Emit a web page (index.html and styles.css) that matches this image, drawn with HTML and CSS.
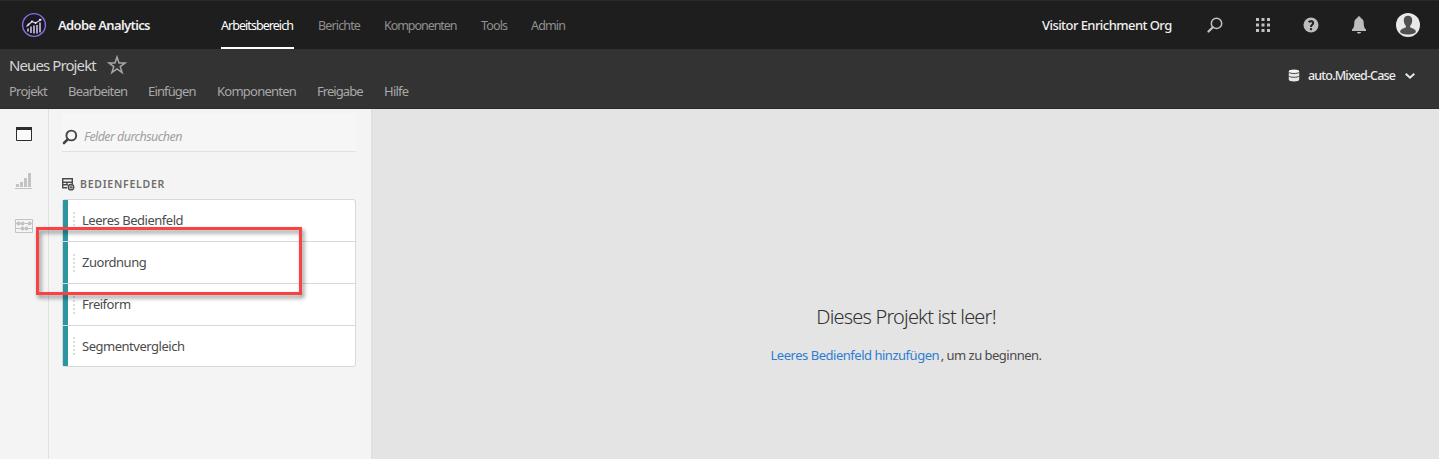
FILE: index.html
```html
<!DOCTYPE html>
<html lang="de">
<head>
<meta charset="utf-8">
<title>Adobe Analytics – Neues Projekt</title>
<link rel="stylesheet" href="styles.css">
</head>
<body>
<header class="topbar">
  <svg class="logo" width="26" height="26" viewBox="0 0 26 26">
    <circle cx="13" cy="13" r="11.400" fill="#1b1824" stroke="#8a6fdc" stroke-width="1.400"/>
    <path d="M7 19.500v-3M10 21v-6.500M13 21.500v-8M16 21.500V13M19 20.500V10.500" stroke="#a89fba" stroke-width="2"/>
    <path d="M5.500 14.500L11 9.500l3.500 1.500L20.500 7.500" fill="none" stroke="#e6e0ee" stroke-width="1.100"/>
    <circle cx="7.500" cy="12.500" r=".9" fill="#eee"/><circle cx="11" cy="9.500" r="1" fill="#eee"/><circle cx="14.500" cy="11" r="1" fill="#eee"/><circle cx="19" cy="7.800" r="1.100" fill="#eee"/>
  </svg>
  <span class="brand">Adobe Analytics</span>
  <nav class="nav">
    <a class="nav-item active">Arbeitsbereich</a>
    <a class="nav-item">Berichte</a>
    <a class="nav-item">Komponenten</a>
    <a class="nav-item">Tools</a>
    <a class="nav-item">Admin</a>
  </nav>
  <span class="org">Visitor Enrichment Org</span>
  <div class="tools">
    <svg width="16" height="16" viewBox="0 0 16 16"><circle cx="9.500" cy="6.400" r="5.200" fill="none" stroke="#c2c2c2" stroke-width="1.500"/><path d="M5.800 10.200L1.500 14.500" stroke="#c2c2c2" stroke-width="2.200" stroke-linecap="round"/></svg>
    <svg width="16" height="16" viewBox="0 0 16 16" fill="#c2c2c2"><path d="M1 1h3v3H1zM6.500 1h3v3h-3zM12 1h3v3h-3zM1 6.500h3v3H1zM6.500 6.500h3v3h-3zM12 6.500h3v3h-3zM1 12h3v3H1zM6.500 12h3v3h-3zM12 12h3v3h-3z"/></svg>
    <svg width="16" height="16" viewBox="0 0 16 16"><circle cx="8" cy="8" r="7.500" fill="#bdbdbd"/><path d="M5.700 5.200C7 3.700 10.300 3.900 10.200 6.100 10.100 7.800 8 7.900 8 9.900" fill="none" stroke="#1e1e1e" stroke-width="1.900"/><circle cx="8" cy="12.100" r="1.200" fill="#1e1e1e"/></svg>
    <svg width="16" height="18" viewBox="0 0 16 18" fill="#bdbdbd"><path d="M8 .3c1 0 1.600.7 1.600 1.700 2.100.7 3 2.400 3.100 4.700.1 4 .7 5.500 2.300 6.800V15H1v-1.500C2.600 12.200 3.200 10.700 3.300 6.700 3.400 4.400 4.300 2.700 6.400 2 6.400 1 7 .3 8 .3zM6 16h4c0 2-4 2-4 0z"/></svg>
    <svg class="avatar" width="24" height="24" viewBox="0 0 24 24"><circle cx="12" cy="12" r="12" fill="#e9e9e9"/><path d="M12 2.800c2.800 0 4.300 1.800 4.200 4.600 0 2.300-.9 4-2 5.100v2c2.600.9 5.300 1.500 5.700 4.200-.1 1.600-3.600 2.700-7.900 2.700s-7.800-1.100-7.900-2.700c.4-2.700 3.100-3.300 5.700-4.200v-2c-1.100-1.100-2-2.800-2-5.100C7.700 4.600 9.200 2.800 12 2.800z" fill="#505050"/></svg>
  </div>
</header>
<section class="projectbar">
  <div class="project">
    <div class="title-row">
      <h1 class="title">Neues Projekt</h1>
      <svg width="20" height="20" viewBox="0 0 20 20"><path d="M10 2l2 5.900h6.200l-5 3.700 1.900 6-5.100-3.700-5.100 3.700 1.900-6-5-3.700H8z" fill="none" stroke="#a6a6a6" stroke-width="1.500"/></svg>
    </div>
    <div class="menu">
      <a>Projekt</a><a>Bearbeiten</a><a>Einfügen</a><a>Komponenten</a><a>Freigabe</a><a>Hilfe</a>
    </div>
  </div>
  <div class="suite">
    <svg width="12" height="13" viewBox="0 0 12 13"><path d="M.8 2.200v8.600c0 2.200 10.400 2.200 10.400 0V2.200" fill="#e8e8e8"/><ellipse cx="6" cy="2.200" rx="5.200" ry="1.800" fill="#f4f4f4"/><path d="M.8 3.200c1 1.700 9.400 1.700 10.400 0M.8 7c1 1.700 9.400 1.700 10.400 0" fill="none" stroke="#444" stroke-width="1"/></svg>
    <span class="suite-name">auto.Mixed-Case</span>
    <svg width="12" height="8" viewBox="0 0 12 8"><path d="M1.700 1.700L6 5.700l4.300-4" fill="none" stroke="#e8e8e8" stroke-width="2"/></svg>
  </div>
</section>
<main class="workspace">
  <aside class="rail">
    <svg width="18" height="16" viewBox="0 0 18 16"><path d="M1.500 2.500h15v11h-15z" fill="#fafafa" stroke="#2c2c2c"/><path d="M1 0h16v3H1z" fill="#2c2c2c"/></svg>
    <svg width="18" height="16" viewBox="0 0 18 16" fill="#c3c3c3"><path d="M0 15h17v1H0zM1 11h3v3H1zM5 9h3v5H5zM9 5h3v9H9zM13 0h3v14h-3z"/></svg>
    <svg width="18" height="14" viewBox="0 0 18 14"><path d="M.5.5h17v13H.5zM0 4.500h18M0 9.500h18" fill="none" stroke="#c3c3c3"/><g fill="#c3c3c3"><circle cx="3.500" cy="4.500" r="1.900"/><circle cx="7.500" cy="4.500" r="1.900"/><circle cx="14.500" cy="4.500" r="1.900"/><circle cx="7.500" cy="9.500" r="1.900"/><circle cx="11.500" cy="9.500" r="1.900"/></g></svg>
  </aside>
  <aside class="panel">
    <div class="search">
      <svg width="16" height="16" viewBox="0 0 16 16"><circle cx="9.300" cy="6.500" r="4.900" fill="none" stroke="#444" stroke-width="1.900"/><path d="M5.700 10.300L2 14" stroke="#444" stroke-width="2.600" stroke-linecap="round"/></svg>
      <span class="placeholder">Felder durchsuchen</span>
    </div>
    <div class="group-head">
      <svg width="13" height="13" viewBox="0 0 13 13"><path d="M.7 10V.7h9.600V6M.7 4.200h9.600M5 4.200v2.500M0 6.800h6M0 9.700h5" fill="none" stroke="#4b4b4b" stroke-width="1.400"/><circle cx="9" cy="9.200" r="2.700" fill="#f4f4f4" stroke="#4b4b4b" stroke-width="1.400"/><path d="M7.300 9.200h3.400M9 7.500v3.400" stroke="#4b4b4b"/></svg>
      <h2 class="group-title">Bedienfelder</h2>
    </div>
    <div class="list">
      <div class="item"><i class="grip"></i><span class="label">Leeres Bedienfeld</span></div>
      <div class="item"><i class="grip"></i><span class="label">Zuordnung</span></div>
      <div class="item"><i class="grip"></i><span class="label">Freiform</span></div>
      <div class="item"><i class="grip"></i><span class="label">Segmentvergleich</span></div>
      <div class="highlight"></div>
    </div>
  </aside>
  <section class="canvas">
    <p class="empty-title">Dieses Projekt ist leer!</p>
    <p class="empty-hint"><a class="link">Leeres Bedienfeld hinzufügen</a><span class="hint-rest">, um zu beginnen.</span></p>
  </section>
</main>
</body>
</html>
```
FILE: styles.css
```css
* { box-sizing: border-box; }
body {
  margin: 0;
  height: 459px;
  display: flex;
  flex-direction: column;
  overflow: hidden;
  font-family: "Noto Sans", "Open Sans", sans-serif;
  font-size: 13px;
  color: #4b4b4b;
  white-space: nowrap;
}
svg { display: block; flex: none; }
h1, h2, p { margin: 0; font-weight: 400; }

.topbar {
  height: 49px;
  flex: none;
  display: flex;
  align-items: center;
  padding: 1px 19px 0 21px;
  background: #1e1e1e;
  border-top: 1px solid #292929;
}
.logo { position: relative; top: -1px; }
.brand { width: 163px; margin-left: 11px; margin-top: -2px; color: #f0f0f0; font-weight: 600; letter-spacing: -0.63px; }
.nav { display: flex; gap: 24px; align-self: stretch; }
.nav-item { display: flex; align-items: center; color: #909090; letter-spacing: -0.85px; font-size: 12.5px; border-bottom: 2px solid transparent; padding-top: 2px; }
.nav-item:nth-child(1) { width: 73px; letter-spacing: -0.95px; }
.nav-item:nth-child(2) { width: 42px; }
.nav-item:nth-child(3) { width: 73px; letter-spacing: -1.05px; }
.nav-item:nth-child(4) { width: 26px; }
.nav-item:nth-child(5) { width: 34px; }
.nav-item.active { color: #fff; border-bottom-color: #fff; }
.org { margin-left: auto; margin-top: -2px; width: 130px; color: #f0f0f0; font-weight: 500; letter-spacing: -0.56px; }
.tools { display: flex; align-items: center; gap: 32px; margin-left: 35px; margin-top: -1px; }
.avatar { margin-left: -3px; }

.projectbar {
  height: 60px;
  flex: none;
  display: flex;
  justify-content: space-between;
  padding: 0 23px 0 9px;
  background: #333;
  border-bottom: 1px solid #2b2b2b;
}
.title-row { display: flex; align-items: center; height: 32px; gap: 11px; }
.title { width: 87px; font-size: 15px; letter-spacing: -0.9px; color: #d6d6d6; }
.menu { display: flex; gap: 20px; height: 20px; align-items: center; color: #a8a8a8; letter-spacing: -0.75px; }
.menu a:nth-child(1) { width: 39px; }
.menu a:nth-child(2) { width: 60px; letter-spacing: -0.8px; }
.menu a:nth-child(3) { width: 49px; letter-spacing: -0.85px; }
.menu a:nth-child(4) { width: 80px; }
.menu a:nth-child(5) { width: 47px; letter-spacing: -0.95px; }
.suite { display: flex; align-items: center; height: 53px; color: #ebebeb; }
.suite-name { width: 88px; margin: 0 8px; font-weight: 500; font-size: 12.5px; letter-spacing: -0.82px; }

.workspace { flex: 1; display: flex; background: #f4f4f4; }
.rail { width: 49px; border-right: 1px solid #e1e1e1; padding: 18px 0 0 15px; display: flex; flex-direction: column; gap: 30px; }
.panel { width: 322px; padding: 5px 15px 0 13px; }
.search { display: flex; align-items: center; gap: 6px; height: 38px; background: #f6f6f6; border-bottom: 1px solid #e1e1e1; padding-top: 8px; }
.placeholder { color: #a0a0a0; font-style: italic; font-size: 12.5px; letter-spacing: -0.58px; }
.group-head { display: flex; align-items: center; gap: 5px; height: 16px; margin-top: 24px; }
.group-title { font-size: 10.5px; font-weight: 600; letter-spacing: 0.75px; text-transform: uppercase; color: #6e6e6e; }
.list { position: relative; margin-top: 7px; height: 168px; border: 1px solid #d8d8d8; border-radius: 3px; background: #fff; }
.item { display: flex; align-items: center; height: 42px; border-bottom: 1px solid #d8d8d8; letter-spacing: -0.48px; }
.item:nth-child(4) { height: 40px; border-bottom: 0; }
.item::before { content: ""; width: 5px; align-self: stretch; background: #2c96a0; }
.label { padding-bottom: 2px; }
.item:nth-child(4) .label { padding-bottom: 0; }
.grip { width: 2px; height: 18px; margin: 0 7px 0 5px; background: repeating-linear-gradient(#dcdcdc 0 2px, transparent 2px 4px); }
.highlight { position: absolute; left: -27px; top: 27px; width: 266px; height: 68px; border: 3px solid #fb4242; filter: drop-shadow(2px 3px 2px rgba(0, 0, 0, 0.45)); }

.canvas { flex: 1; background: #e4e4e4; display: flex; flex-direction: column; align-items: center; padding-top: 194px; border-left: 2px solid #e0e0e0; }
.empty-title { height: 28px; line-height: 28px; font-size: 20px; font-weight: 300; letter-spacing: -0.82px; color: #323232; }
.empty-hint { margin-top: 14px; line-height: 20px; display: flex; width: 271px; letter-spacing: -0.48px; }
.link { color: #2d7ed2; width: 171px; }
.hint-rest { letter-spacing: -0.52px; }
```
